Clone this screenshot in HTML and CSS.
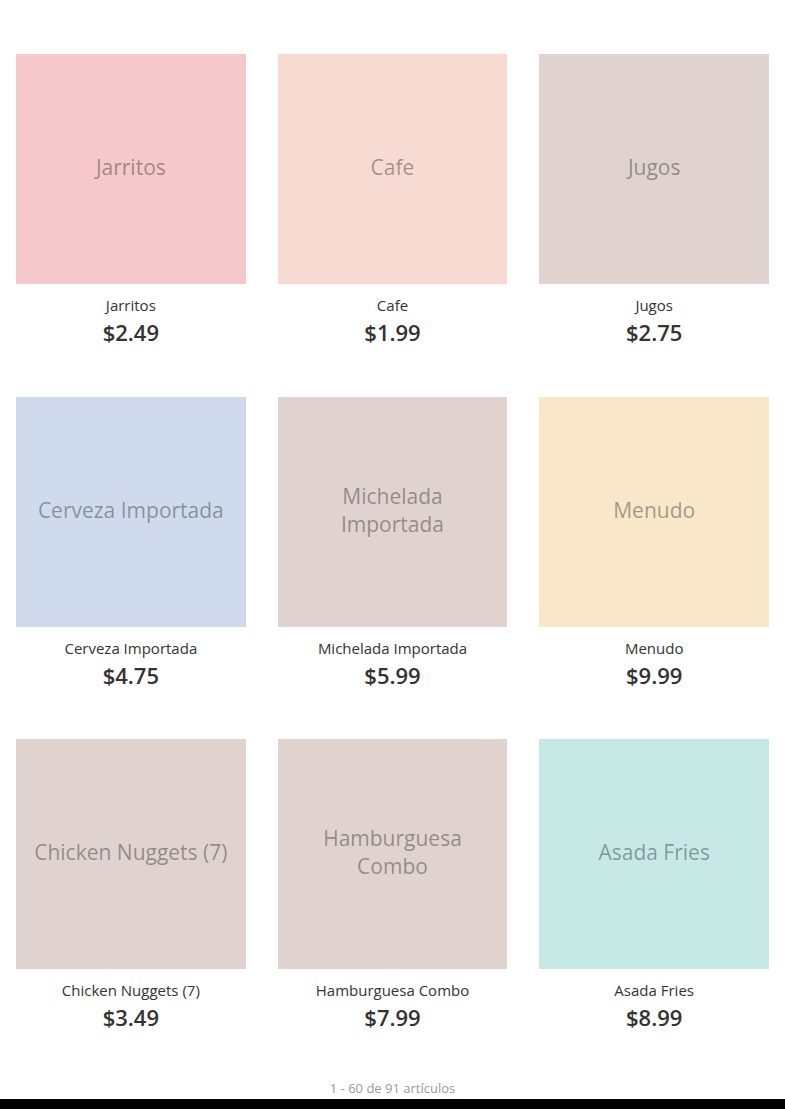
FILE: index.html
```html
<!DOCTYPE html>
<html lang="es">
<head>
    <meta charset="UTF-8">
    <meta name="viewport" content="width=device-width, initial-scale=1.0">
    <title>Menú</title>
    <link rel="stylesheet" href="styles.css">
</head>
<body>
    <div class="grid">
        <div class="item">
            <div class="tile pink"><span>Jarritos</span></div>
            <div class="name">Jarritos</div>
            <div class="price">$2.49</div>
        </div>
        <div class="item">
            <div class="tile peach"><span>Cafe</span></div>
            <div class="name">Cafe</div>
            <div class="price">$1.99</div>
        </div>
        <div class="item">
            <div class="tile mauve"><span>Jugos</span></div>
            <div class="name">Jugos</div>
            <div class="price">$2.75</div>
        </div>
        <div class="item">
            <div class="tile blue"><span>Cerveza Importada</span></div>
            <div class="name">Cerveza Importada</div>
            <div class="price">$4.75</div>
        </div>
        <div class="item">
            <div class="tile mauve"><span>Michelada<br>Importada</span></div>
            <div class="name">Michelada Importada</div>
            <div class="price">$5.99</div>
        </div>
        <div class="item">
            <div class="tile yellow"><span>Menudo</span></div>
            <div class="name">Menudo</div>
            <div class="price">$9.99</div>
        </div>
        <div class="item">
            <div class="tile mauve"><span>Chicken Nuggets (7)</span></div>
            <div class="name">Chicken Nuggets (7)</div>
            <div class="price">$3.49</div>
        </div>
        <div class="item">
            <div class="tile mauve"><span>Hamburguesa<br>Combo</span></div>
            <div class="name">Hamburguesa Combo</div>
            <div class="price">$7.99</div>
        </div>
        <div class="item">
            <div class="tile teal"><span>Asada Fries</span></div>
            <div class="name">Asada Fries</div>
            <div class="price">$8.99</div>
        </div>
    </div>

    <div class="count">1 - 60 de 91 artículos</div>
    <div class="footer"></div>
</body>
</html>
```

FILE: styles.css
```css
body {
    margin: 0;
    font-family: "Open Sans", "Liberation Sans", sans-serif;
    color: #333;
    background: #fff;
}
.grid {
    display: grid;
    grid-template-columns: repeat(3, 1fr);
    column-gap: 32px;
    row-gap: 50.5px;
    padding: 54px 16px 0;
}
.item {
    text-align: center;
}
.tile {
    height: 230px;
    box-sizing: border-box;
    display: flex;
    align-items: center;
    justify-content: center;
    font-size: 21px;
    line-height: 28px;
    color: rgba(0, 0, 0, 0.36);
    padding: 0 8px 4px;
}
.pink { background-color: #f5c8cb; }
.peach { background-color: #f7dbd3; }
.mauve { background-color: #e0d2ce; }
.blue { background-color: #cfdaec; }
.yellow { background-color: #f9e7ca; }
.teal { background-color: #c6e9e6; }
.name {
    margin-top: 11px;
    font-size: 15px;
    line-height: 20px;
}
.price {
    margin-top: 3px;
    font-size: 22px;
    line-height: 28px;
    font-weight: 600;
}
.count {
    margin-top: 47px;
    text-align: center;
    font-size: 13px;
    line-height: 20px;
    color: #999;
}
.footer {
    margin-top: 1px;
    height: 200px;
    background: #000;
}
```
